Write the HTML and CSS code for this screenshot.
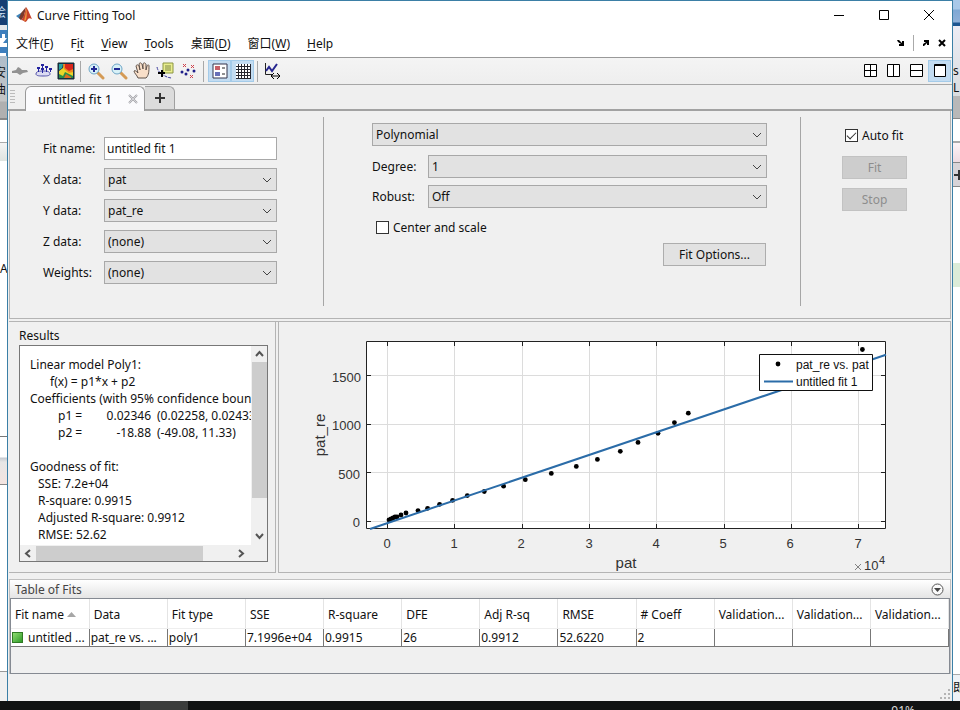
FILE: index.html
```html
<!DOCTYPE html>
<html lang="en">
<head>
<meta charset="utf-8">
<title>Curve Fitting Tool</title>
<link rel="stylesheet" href="styles.css">
</head>
<body>
<div class="desktop">
  <div class="edge edge-left" aria-hidden="true">
    <div class="strip l-navy"><span>绘</span></div>
    <div class="strip l-blue"><svg width="8" height="31" viewBox="0 0 8 31"><path d="M0 8h2v-4h3v4h2l-4 5H0zM0 13h7v4H0zM0 23h6v4H0z" fill="#fff"/></svg></div>
    <div class="strip l-gray"><span>安</span><span>曲</span></div>
    <div class="strip l-white1"></div>
    <div class="strip l-pale"></div>
    <div class="strip l-white2"><span>A</span></div>
    <div class="strip l-bands"></div>
    <div class="strip l-white3"></div>
    <div class="strip l-foot"></div>
  </div>

  <div class="window">
    <header class="titlebar">
      <svg class="logo" width="17" height="16" viewBox="0 0 17 16"><path d="M0 9l5-3 3 3-3 4z" fill="#3d83b8"/><path d="M5 6l5-6-2 9-3 4-2-2z" fill="#7a3b2b"/><path d="M10 0c2 2 4 8 6 12-2-1-3-1-4 0-1 2-2 3-3 3-1-1-2-2-4-2 3-3 4-8 5-13z" fill="#c8432a"/><path d="M10 1c1 4 1 7 0 12l-2 1c1-4 2-8 2-13z" fill="#ef9a3c"/></svg>
      <h1>Curve Fitting Tool</h1>
      <div class="win-buttons">
        <button aria-label="Minimize"><svg width="12" height="12" viewBox="0 0 12 12"><path d="M1 6.500h10" class="ln"/></svg></button>
        <button aria-label="Maximize"><svg width="12" height="12" viewBox="0 0 12 12"><path d="M1.500 1.500h9v9h-9z" class="ln"/></svg></button>
        <button aria-label="Close"><svg width="12" height="12" viewBox="0 0 12 12"><path d="M1 1l10 10M11 1L1 11" class="ln"/></svg></button>
      </div>
    </header>

    <nav class="menubar">
      <button>文件(<u>F</u>)</button><button>F<u>i</u>t</button><button><u>V</u>iew</button><button><u>T</u>ools</button><button>桌面(<u>D</u>)</button><button>窗口(<u>W</u>)</button><button><u>H</u>elp</button>
      <div class="dock">
        <button aria-label="Dock all"><svg width="8" height="8" viewBox="0 0 8 8"><path d="M0 1h2l3 3V2h2v5H2V5h2L1 3z"/></svg></button>
        <i class="vsep"></i>
        <button aria-label="Undock"><svg width="8" height="8" viewBox="0 0 8 8"><path d="M2 1h5v5H5V4L2 7H1V5l3-2H2z"/></svg></button>
        <button aria-label="Close fit"><svg width="8" height="8" viewBox="0 0 8 8"><path d="M1 1l6 6M7 1L1 7" class="bold"/></svg></button>
      </div>
    </nav>

    <div class="toolbar">
      <button aria-label="Fit surface"><svg width="18" height="18" viewBox="0 0 18 18"><path d="M1 9l4-1 2-3 2 1 2 2 5 0 1 2-5 1-3 2-3-2-5 0z" fill="#929292"/></svg></button>
      <button aria-label="Residuals"><svg width="18" height="18" viewBox="0 0 18 18"><path d="M2 12c0-3 4-3 8-3s6 1 6 3-4 2-7 2-7 0-7-2z" fill="#dcdcf2" stroke="#5050a8"/><path d="M4.500 10V5M8.500 11V3M12.500 10V4M16.500 10V6" stroke="#2424a0"/><path d="M3 6h3M7 3h3M7 7h3M11 5h3M15 7h3" stroke="#2424a0" stroke-width="2"/></svg></button>
      <button aria-label="Contour plot"><svg width="18" height="18" viewBox="0 0 18 18"><path d="M1 1h16v16H1z" fill="#14305c"/><path d="M2 2h4l-1 4-3 2z" fill="#29a6a0"/><path d="M2 16V9l4-3 1-4h9v14z" fill="#e9d629"/><path d="M6 2h10v8l-4 1-5-4z" fill="#ef8a1d"/><path d="M8 2h8v5l-4 2-4-3z" fill="#d8261b"/><path d="M2 16v-4l4 2 2-4 8 4v2z" fill="#2c8c47"/><path d="M7 16l2-4 5 3v1z" fill="#df6b20"/><path d="M1 1h16v16H1z" fill="none" stroke="#162b28"/></svg></button>
      <i class="sep"></i>
      <button aria-label="Zoom in"><svg width="18" height="18" viewBox="0 0 18 18"><path d="M10 10l6 6" stroke="#d49a55" stroke-width="3" stroke-linecap="round"/><circle cx="7" cy="7" r="5" fill="#d8f1f7" stroke="#6fa6c8"/><path d="M4 7h6M7 4v6" stroke="#222a94" stroke-width="2"/></svg></button>
      <button aria-label="Zoom out"><svg width="18" height="18" viewBox="0 0 18 18"><path d="M10 10l6 6" stroke="#d49a55" stroke-width="3" stroke-linecap="round"/><circle cx="7" cy="7" r="5" fill="#d8f1f7" stroke="#6fa6c8"/><path d="M4 7h6" stroke="#222a94" stroke-width="2"/></svg></button>
      <button aria-label="Pan"><svg width="18" height="18" viewBox="0 0 18 18"><path d="M5 16C4 13 1 11 1 9c1-1 2 0 4 2L3 4c1-2 2-1 3 0l1 4-1-6c1-2 2-1 3 0l1 5 0-5c1-2 2-1 3 0v6l1-4c1-2 2-1 2 0 0 5 0 9-3 12z" fill="#f8dfc9" stroke="#5f524a"/></svg></button>
      <button aria-label="Data cursor"><svg width="18" height="18" viewBox="0 0 18 18"><path d="M1 5c1 5 4 7 8 9 2 1 4 2 7 2" fill="none" stroke="#3a3a9c" stroke-dasharray="3 1"/><path d="M7 1h10v10H7z" fill="#e9ee8e" stroke="#8a9440"/><path d="M9 4h6M9 6h6M9 8h6" stroke="#7c8646"/><path d="M2 11h7M6 8v7" stroke="#000" stroke-width="2"/></svg></button>
      <button aria-label="Exclude outliers"><svg width="18" height="18" viewBox="0 0 18 18"><path d="M4 2l3 3M7 2L4 5M12 3l3 3M15 3l-3 3M11 13l3 3M14 13l-3 3" stroke="#d0404a"/><g fill="#20208a"><circle cx="3" cy="10" r="1.500"/><circle cx="7" cy="12" r="1.500"/><circle cx="9" cy="8" r="1.500"/><circle cx="15" cy="9" r="1.500"/></g></svg></button>
      <i class="sep sep-wide"></i>
      <button class="on" aria-label="Legend"><svg width="18" height="18" viewBox="0 0 18 18"><path d="M2 2h14v14H2z" fill="#fff" stroke="#34344c"/><path d="M4 4h5v4H4z" fill="#c85f67"/><path d="M4 10h5v4H4z" fill="#6870b8"/><path d="M11 6h3M11 12h3" stroke="#222"/></svg></button>
      <button class="on" aria-label="Grid"><svg width="18" height="18" viewBox="0 0 18 18"><path d="M2 2h15v15H2z" fill="#fff"/><path d="M4.500 2v15M7.500 2v15M10.500 2v15M13.500 2v15M16.500 2v15M2 4.500h15M2 7.500h15M2 10.500h15M2 13.500h15M2 16.500h15" stroke="#26262e"/></svg></button>
      <i class="sep"></i>
      <button aria-label="Axes limits"><svg width="20" height="18" viewBox="0 0 20 18"><path d="M2.500 1v11.500H9" fill="none" stroke="#222"/><path d="M3 9l3-4 3 4 5-7" fill="none" stroke="#27278f" stroke-width="2"/><path d="M8 14h9M11 11l-3 3 3 3M14 11l3 3-3 3" fill="none" stroke="#000"/></svg></button>
      <div class="layouts">
        <button aria-label="Tile"><svg width="14" height="14" viewBox="0 0 14 14"><path d="M.5.5h12v12H.5zM6.500 0v13M0 6.500h13" class="box"/></svg></button>
        <button aria-label="Left and right"><svg width="14" height="14" viewBox="0 0 14 14"><path d="M.5.5h12v12H.5zM6.500 0v13" class="box"/></svg></button>
        <button aria-label="Top and bottom"><svg width="14" height="14" viewBox="0 0 14 14"><path d="M.5.5h12v12H.5zM0 6.500h13" class="box"/></svg></button>
        <button class="on" aria-label="Single"><svg width="14" height="14" viewBox="0 0 14 14"><path d="M1.500.5h11v12h-11zM1 1.500h12" class="box"/></svg></button>
      </div>
    </div>

    <div class="tabs">
      <i class="grip"></i>
      <div class="tab"><span>untitled fit 1</span><button aria-label="Close tab"><svg width="10" height="10" viewBox="0 0 10 10"><path d="M1 1l8 8M9 1L1 9" stroke="#a4a4a8" stroke-width="2" fill="none"/><path d="M1 1l8 8M9 1L1 9" stroke="#f4f4f8" fill="none" stroke-width=".6"/></svg></button></div>
      <button class="tab-add" aria-label="New fit"><svg width="12" height="12" viewBox="0 0 12 12"><path d="M1 6h10M6 1v10" stroke="#333" stroke-width="2"/></svg></button>
    </div>

    <main>
      <form class="settings">
        <div class="data">
          <label for="fitname">Fit name:</label><input id="fitname" class="field" type="text" value="untitled fit 1">
          <label for="xd">X data:</label><div class="combo"><select id="xd"><option>pat</option></select><svg width="10" height="6" viewBox="0 0 10 6"><path d="M1 1l4 4 4-4"/></svg></div>
          <label for="yd">Y data:</label><div class="combo"><select id="yd"><option>pat_re</option></select><svg width="10" height="6" viewBox="0 0 10 6"><path d="M1 1l4 4 4-4"/></svg></div>
          <label for="zd">Z data:</label><div class="combo"><select id="zd"><option>(none)</option></select><svg width="10" height="6" viewBox="0 0 10 6"><path d="M1 1l4 4 4-4"/></svg></div>
          <label for="wt">Weights:</label><div class="combo"><select id="wt"><option>(none)</option></select><svg width="10" height="6" viewBox="0 0 10 6"><path d="M1 1l4 4 4-4"/></svg></div>
        </div>
        <div class="model">
          <div class="combo type"><select aria-label="Fit type"><option>Polynomial</option></select><svg width="10" height="6" viewBox="0 0 10 6"><path d="M1 1l4 4 4-4"/></svg></div>
          <div class="model-rows">
            <label for="deg">Degree:</label><div class="combo"><select id="deg"><option>1</option></select><svg width="10" height="6" viewBox="0 0 10 6"><path d="M1 1l4 4 4-4"/></svg></div>
            <label for="rob">Robust:</label><div class="combo"><select id="rob"><option>Off</option></select><svg width="10" height="6" viewBox="0 0 10 6"><path d="M1 1l4 4 4-4"/></svg></div>
          </div>
          <label class="check"><input type="checkbox">Center and scale</label>
          <button type="button" class="push options">Fit Options...</button>
        </div>
        <div class="run">
          <label class="check"><input type="checkbox" checked>Auto fit</label>
          <button type="button" class="push" disabled>Fit</button>
          <button type="button" class="push" disabled>Stop</button>
        </div>
      </form>

      <div class="output">
        <section class="results">
          <h2>Results</h2>
          <div class="viewer">
            <div class="report">
              <p>Linear model Poly1:</p>
              <p class="in2">f(x) = p1*x + p2</p>
              <p>Coefficients (with 95% confidence bounds):</p>
              <div class="coef"><span>p1 =</span><span class="val">0.02346</span><span>(0.02258, 0.02433)</span></div>
              <div class="coef"><span>p2 =</span><span class="val">-18.88</span><span>(-49.08, 11.33)</span></div>
              <p class="gap">Goodness of fit:</p>
              <p class="in1">SSE: 7.2e+04</p>
              <p class="in1">R-square: 0.9915</p>
              <p class="in1">Adjusted R-square: 0.9912</p>
              <p class="in1">RMSE: 52.62</p>
            </div>
            <div class="vbar"><svg width="9" height="16" viewBox="0 0 9 16"><path d="M1 10l3.500-4L8 10"/></svg><i></i><svg width="9" height="16" viewBox="0 0 9 16"><path d="M1 5l3.500 4L8 5"/></svg></div>
            <div class="hbar"><svg width="16" height="9" viewBox="0 0 16 9"><path d="M10 1L6 4.500 10 8"/></svg><i></i><svg width="16" height="9" viewBox="0 0 16 9"><path d="M6 1l4 3.500L6 8"/></svg></div>
          </div>
        </section>

        <section class="plot">
          <svg viewBox="279 322 671 250" role="img" aria-label="pat_re vs. pat">
            <path d="M366 341h520v188H366z" fill="#fff"/>
            <path class="grid" d="M387.500 342v186M454.500 342v186M522.500 342v186M589.500 342v186M656.500 342v186M724.500 342v186M791.500 342v186M858.500 342v186M367 375.500h518M367 424.500h518M367 472.500h518M367 521.500h518"/>
            <g id="points">
              <circle cx="389" cy="520" r="2.400"/><circle cx="391" cy="519" r="2.400"/><circle cx="393" cy="518" r="2.400"/><circle cx="395" cy="517" r="2.400"/><circle cx="397" cy="517" r="2.400"/><circle cx="401" cy="515" r="2.400"/><circle cx="406" cy="513" r="2.400"/><circle cx="418" cy="510.600" r="2.400"/><circle cx="427.600" cy="508.300" r="2.400"/><circle cx="439.600" cy="504.300" r="2.400"/><circle cx="452.600" cy="500.300" r="2.400"/><circle cx="467.300" cy="495.600" r="2.400"/><circle cx="484.300" cy="491.500" r="2.400"/><circle cx="503.600" cy="486.200" r="2.400"/><circle cx="525.300" cy="479.700" r="2.400"/><circle cx="551.300" cy="473.400" r="2.400"/><circle cx="576.300" cy="466.400" r="2.400"/><circle cx="597.400" cy="459.400" r="2.400"/><circle cx="620.300" cy="451.300" r="2.400"/><circle cx="638" cy="442.400" r="2.400"/><circle cx="658" cy="433.300" r="2.400"/><circle cx="674.400" cy="422.600" r="2.400"/><circle cx="688.300" cy="413.200" r="2.400"/><circle cx="862.400" cy="349.500" r="2.400"/>
            </g>
            <path class="axis" d="M366.500 341.500h519v187h-519zM387.500 342v4M454.500 342v4M522.500 342v4M589.500 342v4M656.500 342v4M724.500 342v4M791.500 342v4M858.500 342v4M387.500 528v-4M454.500 528v-4M522.500 528v-4M589.500 528v-4M656.500 528v-4M724.500 528v-4M791.500 528v-4M858.500 528v-4M367 375.500h4M367 424.500h4M367 472.500h4M367 521.500h4M885 375.500h-4M885 424.500h-4M885 472.500h-4M885 521.500h-4"/>
            <path class="fit" d="M370 529L886 354.700"/>
            <g class="tick" text-anchor="end"><text x="361" y="382">1500</text><text x="361" y="430">1000</text><text x="360" y="479">500</text><text x="360" y="527">0</text></g>
            <g class="tick" text-anchor="middle"><text x="387" y="548">0</text><text x="454" y="548">1</text><text x="521" y="548">2</text><text x="589" y="548">3</text><text x="656" y="548">4</text><text x="723" y="548">5</text><text x="790" y="548">6</text><text x="858" y="548">7</text></g>
            <text class="name" x="626" y="568" text-anchor="middle">pat</text>
            <text class="name" transform="translate(325 435) rotate(-90)" text-anchor="middle">pat_re</text>
            <path d="M855 564l6 6M861 564l-6 6" stroke="#666" stroke-width=".8"/>
            <text class="tick" x="864" y="570">10</text><text class="exp" x="879" y="564">4</text>
            <path d="M759.500 354.500h113v36h-113z" fill="#fff" stroke="#111"/>
            <circle cx="778" cy="364" r="2.400"/><path class="fit" d="M764 381.500h29"/>
            <text class="key" x="796" y="369">pat_re vs. pat</text><text class="key" x="796" y="386">untitled fit 1</text>
          </svg>
        </section>
      </div>

      <section class="fits">
        <div class="fits-head"><h2>Table of Fits</h2><button aria-label="Table actions"><svg width="13" height="13" viewBox="0 0 13 13"><circle cx="6.500" cy="6.500" r="5.500" fill="#fafafa" stroke="#555"/><path d="M3 5h7l-3.500 4z" fill="#444"/></svg></button></div>
        <div class="fits-body">
          <table>
            <thead><tr><th>Fit name <svg width="9" height="5" viewBox="0 0 9 5"><path d="M0 5l4.500-5L9 5z" fill="#a6a6a6"/></svg></th><th>Data</th><th>Fit type</th><th>SSE</th><th>R-square</th><th>DFE</th><th>Adj R-sq</th><th>RMSE</th><th># Coeff</th><th>Validation...</th><th>Validation...</th><th>Validation...</th></tr></thead>
            <tbody><tr><td><i class="swatch"></i>untitled ...</td><td>pat_re vs. ...</td><td>poly1</td><td>7.1996e+04</td><td>0.9915</td><td>26</td><td>0.9912</td><td>52.6220</td><td>2</td><td></td><td></td><td></td></tr></tbody>
          </table>
        </div>
      </section>
    </main>
    <footer class="status"><svg width="12" height="12" viewBox="0 0 12 12"><path d="M8 0h2v2H8zM4 4h2v2H4zM8 4h2v2H8zM0 8h2v2H0zM4 8h2v2H4zM8 8h2v2H8z" fill="#b4b4b4"/></svg></footer>
  </div>

  <div class="edge edge-right" aria-hidden="true">
    <div class="strip r-blue"></div>
    <div class="strip r-gray"><span>s</span><span>L</span></div>
    <div class="strip r-dark"></div>
    <div class="strip r-white1"></div>
    <div class="strip r-pink"></div>
    <div class="strip r-add"><svg width="8" height="12" viewBox="0 0 8 12"><path d="M1 6h10M6 1v10" stroke="#333" stroke-width="2"/></svg></div>
    <div class="strip r-white2"></div>
    <div class="strip r-green"></div>
    <div class="strip r-white3"></div>
    <div class="strip r-foot"><span>即</span></div>
  </div>
</div>
<div class="taskbar"><i></i><span>91%</span></div>
</body>
</html>
```

FILE: styles.css
```css
* { box-sizing: border-box; }
body { margin: 0; min-height: 100vh; display: flex; flex-direction: column; overflow: hidden; font: 12px/17px "Noto Sans", "Noto Sans CJK SC", sans-serif; color: #111; }
h1, h2, p { margin: 0; font-size: 12px; font-weight: 400; }
button { border: 0; padding: 0; background: none; font: inherit; color: inherit; }
svg { display: block; flex: none; }

.desktop { flex: 1; display: flex; }
.window { flex: 1; min-width: 0; display: flex; flex-direction: column; border: 1px solid #3b7fa6; border-bottom: 0; background: #f0f0f0; }
.edge { width: 7px; display: flex; flex-direction: column; overflow: hidden; background: #fff; }
.strip { flex: none; overflow: hidden; }
.strip span { display: block; white-space: nowrap; }
.l-navy { height: 25px; background: #163f73; color: #cfe2f5; padding-top: 4px; }
.l-navy span, .l-gray span { margin-left: -6px; }
.l-blue { height: 31px; background: #3e7fbd; border-top: 5px solid #e4e8ea; }
.l-gray { height: 62px; background: linear-gradient(#aebdca, #c6c6c6 45px, #b0b0b0 46px); padding-top: 8px; }
.l-white1 { height: 25px; border-top: 2px solid #888; border-bottom: 1px solid #aaa; }
.l-pale { height: 18px; background: linear-gradient(#f4f4f4, #dfe4e0); }
.l-white2 { height: 276px; padding-top: 99px; border-bottom: 1px solid #777; }
.l-bands { height: 48px; background: linear-gradient(#fff 20px, #c4c9d0 21px, #e6e6e6 25px, #f3e4e0); border-bottom: 1px solid #888; }
.l-white3 { height: 187px; border-bottom: 1px solid #999; }
.l-foot { flex: 1; background: #f0f0f0; }
.r-blue { height: 26px; background: linear-gradient(#a9c8e8 9px, #7fa8d4 10px, #8fb0d8 22px, #1d5590 23px); }
.r-gray { height: 70px; background: linear-gradient(#ececf4, #d9dde0); padding-top: 36px; }
.r-dark { height: 22px; background: #b8b8b8; }
.r-white1 { height: 25px; border-top: 1px solid #888; border-bottom: 2px solid #aaa; }
.r-pink { height: 20px; background: linear-gradient(#fdf3f6, #eedbe2); border-bottom: 1px solid #888; }
.r-add { height: 24px; background: #d8d4d8; border-bottom: 1px solid #888; padding-top: 6px; }
.r-white2 { height: 76px; }
.r-green { height: 24px; background: #dcecd8; }
.r-white3 { height: 388px; border-bottom: 1px solid #aaa; }
.r-foot { flex: 1; background: #eef2f6; padding-top: 4px; }

.titlebar { display: flex; align-items: center; height: 28px; padding-left: 8px; background: #fff; }
.titlebar h1 { margin-left: 4px; }
.win-buttons { margin-left: auto; margin-right: 1px; display: flex; }
.win-buttons button { width: 45px; height: 28px; display: grid; place-items: center; }
.ln { fill: none; stroke: #000; }
.menubar { display: flex; align-items: center; gap: 17px; height: 28px; padding-left: 8px; background: #fff; }
.menubar u { text-underline-offset: 2px; }
.dock { margin-left: auto; margin-right: 6px; display: flex; align-items: center; gap: 8px; }
.vsep { width: 1px; height: 16px; background: #aaa; }
.bold { stroke: #000; stroke-width: 2; }

.toolbar { display: flex; align-items: center; height: 28px; background: linear-gradient(#f4f4f4, #eee); border-top: 1px solid #999; border-bottom: 1px solid #a6a6a6; }
.toolbar button { width: 23px; height: 22px; display: grid; place-items: center; }
.toolbar .on { background: #c3dcf1; border: 1px solid #a4cbe9; }
.sep { width: 1px; height: 21px; margin: 0 3px; background: #a8a8a8; }
.sep-wide { margin: 0 4px; }
.layouts { margin-left: auto; margin-right: 1px; display: flex; }
.box { fill: #fff; stroke: #000; }

.tabs { display: flex; height: 26px; padding-top: 1px; background: #efefef; border-bottom: 2px solid #a2a2a2; }
.grip { width: 5px; margin: 4px 10px 4px 2px; background: repeating-linear-gradient(#bbb 0 1px, transparent 1px 3px); }
.tab { display: flex; align-items: center; justify-content: space-between; width: 120px; padding: 0 6px 0 12px; background: #fbfbfd; border: 1px solid #999; border-bottom: 0; border-radius: 6px 6px 0 0; margin-bottom: -2px; }
.tab span { font-size: 13px; }
.tab-add { width: 30px; display: grid; place-items: center; background: #dcdcdc; border: 1px solid #a0a0a0; border-width: 1px 1px 0 0; border-radius: 0 6px 0 0; }

main { flex: 1; display: flex; flex-direction: column; padding: 0 1px; }
.settings { display: grid; grid-template-columns: 313px 1fr 149px; height: 208px; padding: 6px 0 12px; border: 1px solid #b4b4b4; border-top: 0; }
.data { display: grid; grid-template-columns: 61px 173px; grid-auto-rows: 23px; gap: 8px 0; align-items: center; padding: 20px 0 0 33px; align-content: start; }
.field, .combo { height: 23px; border: 1px solid #a8a8a8; }
.field { width: 100%; padding: 0 2px; background: #fff; font: inherit; color: inherit; }
.combo { position: relative; background: #e2e2e2; }
.combo select { display: block; width: 100%; height: 21px; padding: 0 3px; border: 0; appearance: none; background: none; font: inherit; color: inherit; }
.combo svg { position: absolute; right: 4px; top: 8px; pointer-events: none; }
.combo path { fill: none; stroke: #444; }
.model { display: flex; flex-direction: column; padding: 6px 33px 0 48px; border: 1px solid #a6a6a6; border-width: 0 1px; }
.model-rows { display: grid; grid-template-columns: 56px 1fr; gap: 7px 0; align-items: center; margin: 9px 0 8px; }
.check { display: flex; align-items: center; gap: 4px; height: 23px; }
.check input { appearance: none; width: 13px; height: 13px; margin: 0; border: 1px solid #333; background: #fff; }
.check input:checked::after { content: ""; display: block; width: 8px; height: 4px; margin: 2px 0 0 1px; border: solid #333; border-width: 0 0 1px 1px; transform: rotate(-45deg); }
.model .check { padding-left: 4px; }
.push { height: 23px; border: 1px solid #adadad; background: #e2e2e2; }
.push:disabled { border-color: #c2c2c2; background: #cdcdcd; color: #8d8d8d; }
.options { align-self: flex-end; width: 103px; margin: 4px 1px 0 0; }
.run { display: flex; flex-direction: column; gap: 9px; padding: 7px 0 0 41px; }
.run .push { width: 65px; }
.run .check { padding-left: 3px; }

.output { display: grid; grid-template-columns: 267px 1fr; gap: 2px; margin-top: 2px; border-top: 1px solid #b4b4b4; }
.results, .plot { border: 1px solid #b4b4b4; border-top: 0; }
.results { border-left: 0; padding: 5px 7px 0 10px; }
.viewer { display: grid; grid-template-columns: 1fr 16px; grid-template-rows: 199px 16px; margin-top: 1px; border: 1px solid #777; background: #f0f0f0; }
.report { padding: 10px 0 0 10px; background: #fff; overflow: hidden; white-space: nowrap; }
.in1 { padding-left: 8px; }
.in2 { padding-left: 20px; }
.gap { margin-top: 17px; }
.coef { display: grid; grid-template-columns: 36px 51px max-content; gap: 6px; padding-left: 28px; }
.val { text-align: right; }
.vbar, .hbar { display: flex; align-items: center; }
.vbar { flex-direction: column; }
.vbar i { width: 15px; height: 136px; background: #cdcdcd; margin-bottom: auto; }
.hbar i { width: 167px; height: 15px; background: #cdcdcd; margin-right: auto; }
.hbar { margin-right: 2px; }
.vbar path, .hbar path { fill: none; stroke: #555; stroke-width: 2; }
.plot > svg { width: 100%; height: auto; }
.grid { stroke: #dcdcdc; }
.axis { fill: none; stroke: #222; }
.fit { fill: none; stroke: #2b6ca8; stroke-width: 2; }
.tick, .name, .key, .exp { font-family: "Liberation Sans", sans-serif; fill: #333; }
.tick { font-size: 13px; }
.name { font-size: 15px; }
.key { font-size: 12px; fill: #111; }
.exp { font-size: 11px; }

.fits { margin-top: 6px; border: 1px solid #c0c0c0; border-bottom: 0; }
.fits-head { display: flex; align-items: center; justify-content: space-between; height: 18px; padding: 0 6px 0 5px; background: linear-gradient(#fff, #e4e4e4); color: #444; }
.fits-body { height: 76px; border: 1px solid #858a92; }
table { width: 100%; table-layout: fixed; border-collapse: collapse; background: #fff; border-bottom: 1px solid #777; }
th, td { padding: 0; text-align: left; font-weight: 400; white-space: nowrap; overflow: hidden; }
th { height: 29px; padding: 2px 0 0 4px; border-right: 1px solid #e4e4e4; border-bottom: 1px solid #eee; }
th svg, .swatch { display: inline-block; }
th svg { vertical-align: 2px; }
td { height: 18px; padding-left: 1px; border-right: 1px solid #777; }
.swatch { width: 11px; height: 11px; margin-right: 5px; border: 1px solid #2f7a24; background: linear-gradient(135deg, #8fdc72, #2f9a28); vertical-align: -1px; }
.status { display: flex; justify-content: flex-end; align-items: flex-end; height: 26px; }
.taskbar { display: flex; justify-content: space-between; height: 9px; padding: 0 45px 0 140px; background: #111313; color: #ddd; overflow: hidden; }
.taskbar i { width: 48px; background: #3b3d3c; }
.taskbar span { line-height: 19px; }
```
